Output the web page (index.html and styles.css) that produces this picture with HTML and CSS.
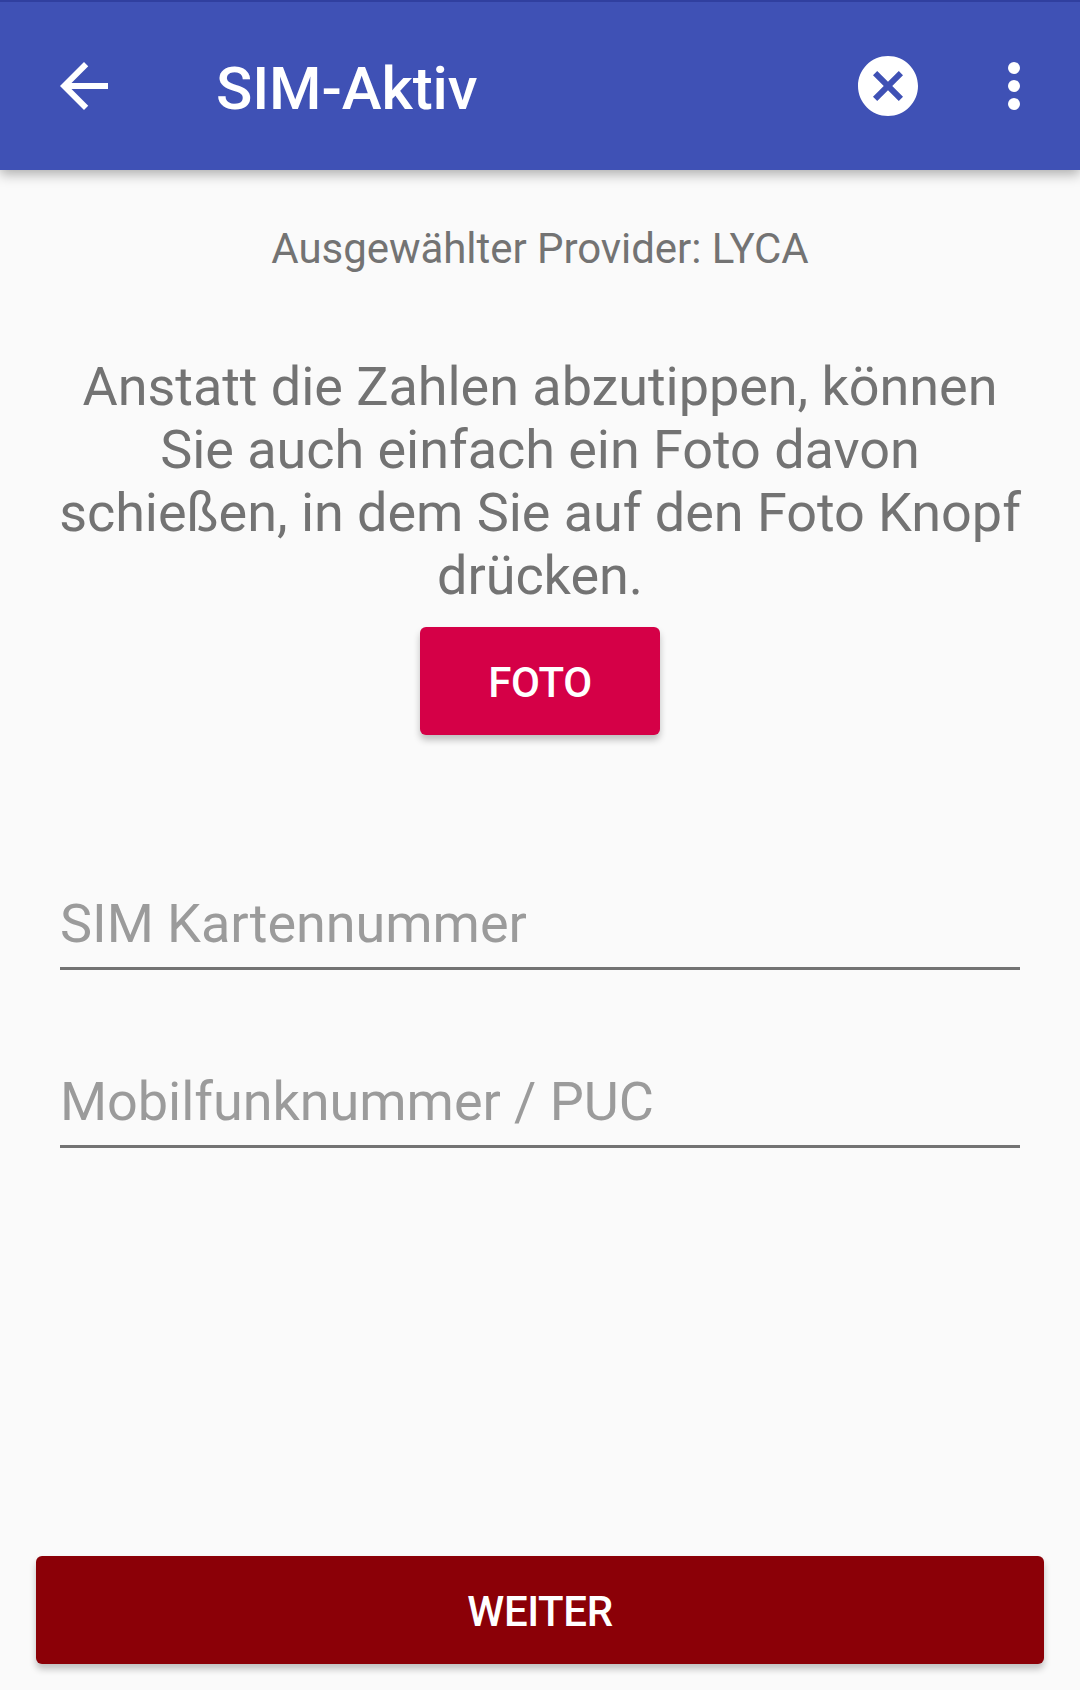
FILE: index.html
```
<!DOCTYPE html>
<html lang="de">

<head>
  <title>SIM-Aktiv</title>
  <meta charset="utf-8">
  <link rel="stylesheet" href="styles.css">
</head>

<body>
  <header class="toolbar">
    <svg class="icon" viewBox="0 0 24 24">
      <path fill="#fff" d="M20 11H7.83l5.59-5.59L12 4l-8 8 8 8 1.41-1.41L7.83 13H20v-2z" />
    </svg>
    <h1 class="title">SIM-Aktiv</h1>
    <svg class="icon" viewBox="0 0 24 24">
      <path fill="#fff" d="M12 2C6.47 2 2 6.47 2 12s4.47 10 10 10 10-4.47 10-10S17.53 2 12 2zm5 13.59L15.59 17 12 13.41 8.41 17 7 15.59 10.59 12 7 8.41 8.41 7 12 10.59 15.59 7 17 8.41 13.41 12 17 15.59z" />
    </svg>
    <svg class="icon menu" viewBox="0 0 24 24">
      <circle cx="12" cy="6" r="2" fill="#fff" />
      <circle cx="12" cy="12" r="2" fill="#fff" />
      <circle cx="12" cy="18" r="2" fill="#fff" />
    </svg>
  </header>
  <main class="content">
    <p class="provider">Ausgewählter Provider: LYCA</p>
    <p class="hint">Anstatt die Zahlen abzutippen, können<br />Sie auch einfach ein Foto davon<br />schießen, in dem Sie auf den Foto Knopf<br />drücken.</p>
    <button class="btn foto">FOTO</button>
    <input class="field" type="text" placeholder="SIM Kartennummer">
    <input class="field" type="text" placeholder="Mobilfunknummer / PUC">
  </main>
  <button class="btn weiter">WEITER</button>
</body>

</html>
```

FILE: styles.css
```
* {
  box-sizing: border-box;
  padding: 0;
  margin: 0;
}

body {
  display: flex;
  flex-direction: column;
  height: 1690px;
  padding-bottom: 26px;
  background: #fafafa;
  font-family: Roboto, sans-serif;
  color: #737373;
}

.toolbar {
  display: flex;
  align-items: center;
  height: 170px;
  padding: 0 30px 0 48px;
  border-top: 2px solid #303f9f;
  background: #3f51b5;
  box-shadow: 0 4px 12px rgba(0, 0, 0, 0.32);
}

.icon {
  width: 72px;
  height: 72px;
}

.menu {
  margin-left: 54px;
}

.title {
  flex: 1;
  padding: 5px 0 0 96px;
  font-size: 60px;
  font-weight: 500;
  line-height: 70px;
  letter-spacing: -0.1px;
  color: #fff;
}

.content {
  display: flex;
  flex: 1;
  flex-direction: column;
  align-items: center;
  padding: 54px 48px 0;
}

.provider {
  font-size: 42px;
  line-height: 50px;
  letter-spacing: -0.05px;
}

.hint {
  margin-top: 81px;
  font-size: 54px;
  line-height: 63px;
  letter-spacing: -0.05px;
  text-align: center;
  white-space: nowrap;
}

.btn {
  padding-top: 4px;
  border: none;
  border-radius: 6px;
  font-family: inherit;
  font-size: 42px;
  font-weight: 500;
  line-height: 50px;
  letter-spacing: -0.4px;
  color: #fff;
  box-shadow: 0 5px 7px rgba(0, 0, 0, 0.24);
}

.foto {
  width: 240px;
  height: 108px;
  margin: 20px 0 137px;
  background: #d50047;
}

.field {
  width: 960px;
  height: 98px;
  margin-bottom: 80px;
  padding-top: 8px;
  border: none;
  border-bottom: 3px solid #737373;
  background: none;
  font-family: inherit;
  font-size: 54px;
  letter-spacing: -0.05px;
  outline: none;
}

.field::placeholder {
  color: #9b9b9b;
}

.weiter {
  height: 108px;
  margin: 0 36px;
  background: #8b0007;
}
```
